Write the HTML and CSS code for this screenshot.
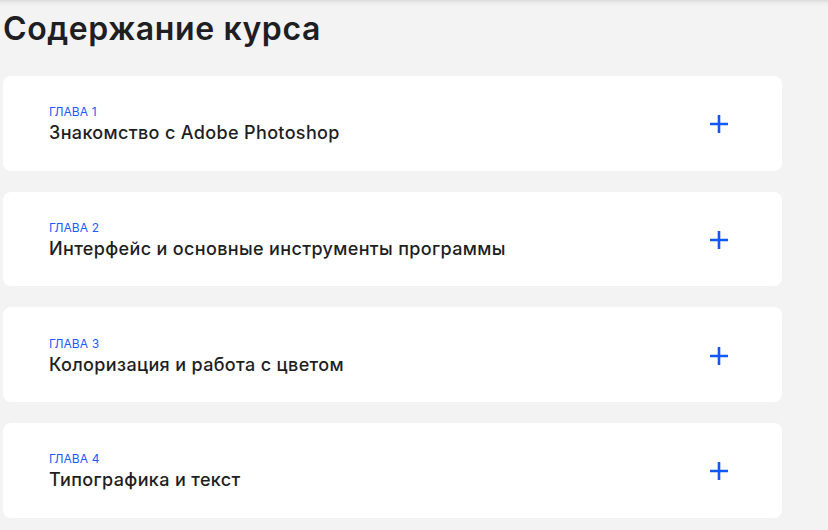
FILE: index.html
```html
<!DOCTYPE html>
<html lang="ru">
<head>
<meta charset="utf-8">
<link rel="stylesheet" href="styles.css">
</head>
<body>
<div class="page">
  <h1 class="heading">Содержание курса</h1>
  <div class="list">
    <div class="card">
      <div class="card-text">
        <div class="chapter">ГЛАВА 1</div>
        <div class="title">Знакомство с Adobe Photoshop</div>
      </div>
      <svg class="plus" width="18" height="18" viewBox="0 0 18 18"><path d="M9 0v18M0 9h18" stroke="#1059f6" stroke-width="2.6" fill="none"/></svg>
    </div>
    <div class="card">
      <div class="card-text">
        <div class="chapter">ГЛАВА 2</div>
        <div class="title">Интерфейс и основные инструменты программы</div>
      </div>
      <svg class="plus" width="18" height="18" viewBox="0 0 18 18"><path d="M9 0v18M0 9h18" stroke="#1059f6" stroke-width="2.6" fill="none"/></svg>
    </div>
    <div class="card">
      <div class="card-text">
        <div class="chapter">ГЛАВА 3</div>
        <div class="title">Колоризация и работа с цветом</div>
      </div>
      <svg class="plus" width="18" height="18" viewBox="0 0 18 18"><path d="M9 0v18M0 9h18" stroke="#1059f6" stroke-width="2.6" fill="none"/></svg>
    </div>
    <div class="card">
      <div class="card-text">
        <div class="chapter">ГЛАВА 4</div>
        <div class="title">Типографика и текст</div>
      </div>
      <svg class="plus" width="18" height="18" viewBox="0 0 18 18"><path d="M9 0v18M0 9h18" stroke="#1059f6" stroke-width="2.6" fill="none"/></svg>
    </div>
  </div>
</div>
</body>
</html>
```
FILE: styles.css
```css
html, body {
  margin: 0;
  padding: 0;
  background: #f3f3f3;
}
body {
  font-family: "Inter", "Noto Sans", sans-serif;
  color: #1e1e23;
  height: 530px;
  overflow: hidden;
}
.page {
  background: linear-gradient(to bottom, #dcdcdc 0px, #ececec 3px, #f3f3f3 7px);
  padding: 9px 46px 0 3px;
}
.heading {
  margin: 0;
  font-size: 32px;
  line-height: 40px;
  font-weight: 600;
  letter-spacing: 0.6px;
  color: #1e1e23;
}
.list {
  margin-top: 27px;
  display: flex;
  flex-direction: column;
  gap: 21px;
}
.card {
  background: #fff;
  border-radius: 8px;
  height: 94.67px;
  box-sizing: border-box;
  padding: 0 54px 0 46px;
  display: flex;
  align-items: center;
  justify-content: space-between;
}
.card-text {
  display: flex;
  flex-direction: column;
  gap: 3px;
  padding-top: 3px;
}
.chapter {
  font-size: 12px;
  line-height: 14px;
  color: #1a5cff;
  font-weight: 400;
  letter-spacing: 0.1px;
}
.title {
  font-size: 18px;
  line-height: 22px;
  font-weight: 500;
  letter-spacing: 0.35px;
  color: #1e1e23;
}
.plus {
  display: block;
  margin-top: 2px;
}
```
